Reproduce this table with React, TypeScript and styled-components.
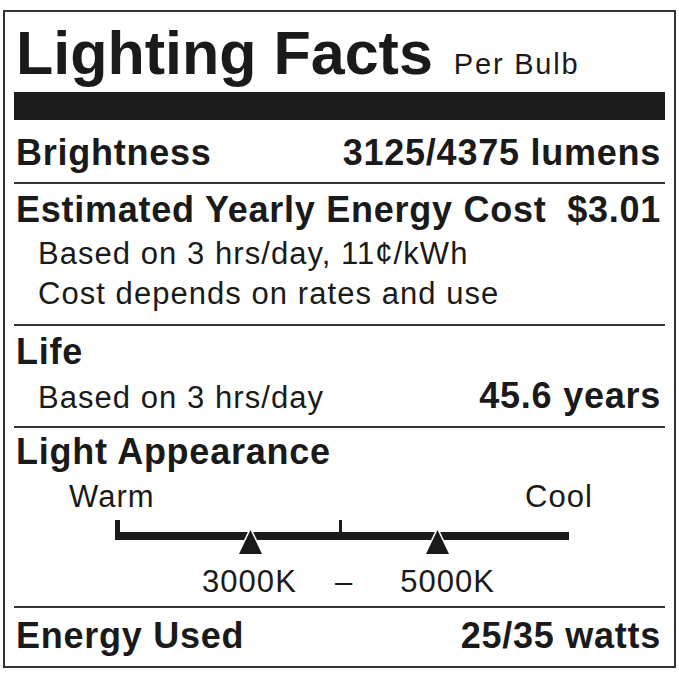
import styled, { createGlobalStyle } from 'styled-components';

const GlobalStyle = createGlobalStyle`
  body {
    margin: 0;
    background: #fff;
  }
`;

// warm -> cool bar with the two range markers
const ScaleDrawing = () => (
  <Scale width={465} height={46} viewBox="0 0 465 46">
    <rect x={5} y={18} width={454} height={8} fill="#1a1a1a" />
    <rect x={5} y={6} width={5} height={13} fill="#1a1a1a" />
    <rect x={229} y={6} width={3} height={13} fill="#1a1a1a" />
    <polygon
      points="140.5,16 129,40 152,40"
      fill="#1a1a1a"
      stroke="#fff"
      strokeWidth={3}
      paintOrder="stroke"
    />
    <polygon
      points="327.5,16 316,40 339,40"
      fill="#1a1a1a"
      stroke="#fff"
      strokeWidth={3}
      paintOrder="stroke"
    />
  </Scale>
);

const App = () => {
  return (
    <>
      <GlobalStyle />
      <Card>
        <Header>
          <Title>Lighting Facts</Title>
          <PerBulb>Per Bulb</PerBulb>
        </Header>
        <ThickBar />

        <Section $pt={13} $pb={9}>
          <Line>
            <Heading>Brightness</Heading>
            <Value>3125/4375 lumens</Value>
          </Line>
        </Section>

        <Section $pt={6} $pb={10}>
          <Line>
            <Heading>Estimated Yearly Energy Cost</Heading>
            <Value>$3.01</Value>
          </Line>
          <SubLines>
            <Line $indent>
              <Text>Based on 3 hrs/day, 11¢/kWh</Text>
            </Line>
            <Line $indent>
              <Text>Cost depends on rates and use</Text>
            </Line>
          </SubLines>
        </Section>

        <Section $pt={6} $pb={10}>
          <Line>
            <Heading>Life</Heading>
          </Line>
          <SubLines>
            <Line $indent>
              <Text>Based on 3 hrs/day</Text>
              <Value>45.6 years</Value>
            </Line>
          </SubLines>
        </Section>

        <Section $pt={4} $pb={7}>
          <Line>
            <Heading>Light Appearance</Heading>
          </Line>
          <EndLabels>
            <Text>Warm</Text>
            <Text>Cool</Text>
          </EndLabels>
          <ScaleDrawing />
          <KelvinLabels>
            <Text>3000K</Text>
            <Dash>–</Dash>
            <Text>5000K</Text>
          </KelvinLabels>
        </Section>

        <Section $pt={8} $pb={0} $last>
          <Line>
            <Heading>Energy Used</Heading>
            <Value>25/35 watts</Value>
          </Line>
        </Section>
      </Card>
    </>
  );
};

const Card = styled.div`
  box-sizing: border-box;
  width: 673px;
  margin: 10px 0 0 3px;
  padding: 0 9px 10px;
  border: 2px solid #333;
  background: #fff;
  color: #1a1a1a;
  font-family: 'Liberation Sans', Arial, sans-serif;
`;

const Header = styled.div`
  box-sizing: border-box;
  height: 80px;
  padding: 11px 0 0 2px;
  display: flex;
  align-items: baseline;
`;

const Title = styled.div`
  font-size: 61px;
  font-weight: 700;
  line-height: 1;
`;

const PerBulb = styled.div`
  margin-left: 21px;
  font-size: 29px;
  letter-spacing: 1.8px;
  line-height: 1;
`;

const ThickBar = styled.div`
  height: 28px;
  background: #1c1c1c;
`;

const Section = styled.div<{ $pt: number; $pb: number; $last?: boolean }>`
  padding: ${({ $pt }) => $pt}px 4px ${({ $pb }) => $pb}px 2px;
  border-bottom: ${({ $last }) => ($last ? 'none' : '2px solid #333')};
`;

const Line = styled.div<{ $indent?: boolean }>`
  display: flex;
  justify-content: space-between;
  align-items: baseline;
  height: 40px;
  line-height: 40px;
  padding-left: ${({ $indent }) => ($indent ? '22px' : '0')};
  white-space: nowrap;
`;

const SubLines = styled.div`
  margin-top: 4px;
`;

const Heading = styled.span`
  font-size: 36px;
  font-weight: 700;
  letter-spacing: 0.75px;
`;

const Value = styled(Heading)``;

const Text = styled.span`
  font-size: 31px;
  letter-spacing: 1.05px;
`;

const EndLabels = styled.div`
  display: flex;
  justify-content: space-between;
  width: 524px;
  height: 34px;
  line-height: 34px;
  margin: 8px 0 0 53px;
`;

const Scale = styled.svg`
  display: block;
  margin-left: 94px;
`;

const KelvinLabels = styled.div`
  display: flex;
  align-items: baseline;
  height: 34px;
  line-height: 34px;
  margin: 5px 0 0 186px;
`;

const Dash = styled(Text)`
  margin: 0 47px 0 38px;
`;

export default App;
